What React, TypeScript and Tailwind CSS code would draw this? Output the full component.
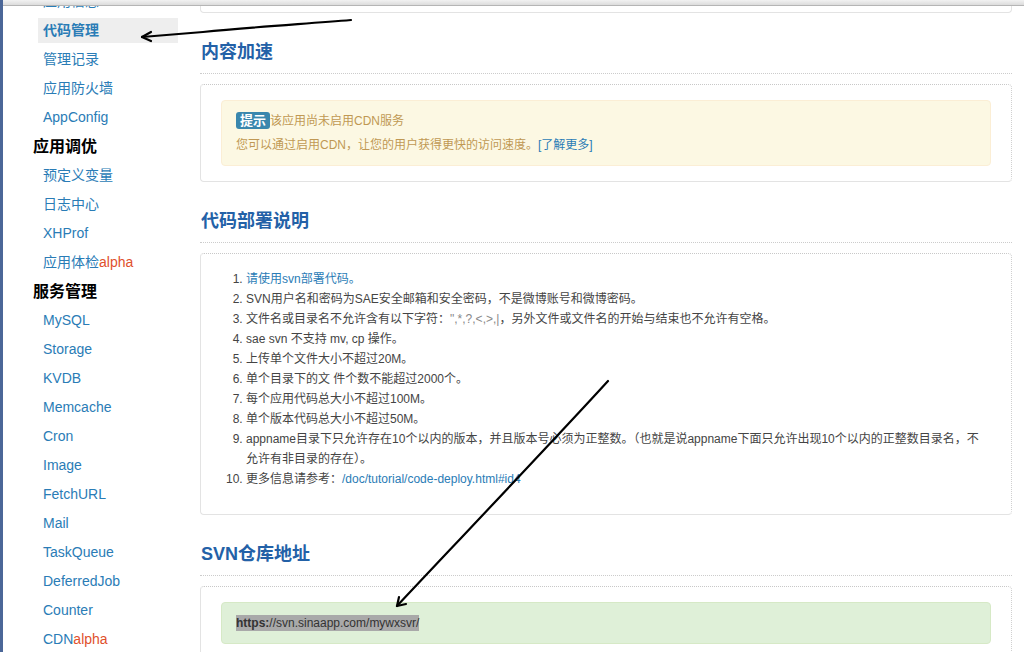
import React from 'react';

type Row = { label: string; kind?: 'head' | 'active'; tag?: string };

const rows: Row[] = [
  { label: '应用信息' },
  { label: '代码管理', kind: 'active' },
  { label: '管理记录' },
  { label: '应用防火墙' },
  { label: 'AppConfig' },
  { label: '应用调优', kind: 'head' },
  { label: '预定义变量' },
  { label: '日志中心' },
  { label: 'XHProf' },
  { label: '应用体检', tag: 'alpha' },
  { label: '服务管理', kind: 'head' },
  { label: 'MySQL' },
  { label: 'Storage' },
  { label: 'KVDB' },
  { label: 'Memcache' },
  { label: 'Cron' },
  { label: 'Image' },
  { label: 'FetchURL' },
  { label: 'Mail' },
  { label: 'TaskQueue' },
  { label: 'DeferredJob' },
  { label: 'Counter' },
  { label: 'CDN', tag: 'alpha' },
];

function Sidebar() {
  return (
    <nav className="w-[197px] shrink-0">
      <ul className="-mt-[13px]">
        {rows.map((r) =>
          r.kind === 'head' ? (
            <li key={r.label} className="h-[29px] flex items-center pl-[30px] text-[16px] font-bold text-black">
              {r.label}
            </li>
          ) : (
            <li key={r.label} className="h-[29px] flex items-center">
              <a
                className={`ml-[35px] w-[140px] h-[25px] flex items-center pl-[5px] text-[14px] text-[#2a7cb6] ${
                  r.kind === 'active' ? 'bg-[#eeeeee] font-semibold text-[#1c6aa6]' : ''
                }`}
              >
                {r.label}
                {r.tag && <span className="text-[#e0502c]">{r.tag}</span>}
              </a>
            </li>
          )
        )}
      </ul>
    </nav>
  );
}

function Heading({ children }: { children: React.ReactNode }) {
  return (
    <h2 className="mt-[27px] pl-px pb-[9px] border-b border-dotted border-[#cccccc] text-[18px] leading-[24px] font-bold text-[#2361a7]">
      {children}
    </h2>
  );
}

function Panel({ children }: { children: React.ReactNode }) {
  return (
    <div className="mt-[10px] rounded-[4px] border border-[#e3e3e3] [border-top-style:dotted] [border-right-style:dotted] border-t-[#c8c8c8] border-r-[#d0d0d0] px-[20px] py-[15px]">
      {children}
    </div>
  );
}

function Arrows() {
  return (
    <svg className="absolute inset-0 pointer-events-none" width="1024" height="652" viewBox="0 0 1024 652">
      <g fill="none" stroke="#000" strokeWidth="2.2" strokeLinecap="round" strokeLinejoin="round">
        <path d="M348 20 C 300 24, 250 27, 200 32 L 139 37" />
        <path d="M139 37 L 148 32 M139 37 L 148 41" />
        <path d="M605 381 C 565 425, 475 520, 394 606" />
        <path d="M394 606 L 396 597 M394 606 L 403 604" />
      </g>
    </svg>
  );
}

export default function App() {
  return (
    <div className="relative w-[1024px] h-[652px] overflow-hidden bg-white border-l-[3px] border-[#4b6798] font-['Liberation_Sans','Noto_Sans_CJK_SC',sans-serif]">
      <div className="absolute top-0 left-0 right-0 h-[6px] z-10 bg-gradient-to-b from-[#f2f2f2] to-[#dcdcdc] border-b border-[#b5b5b5]" />
      <div className="flex">
        <Sidebar />
        <main className="w-[812px] shrink-0">
          <div className="h-[13px] border border-t-0 border-[#e3e3e3] rounded-b-[4px]" />

          <Heading>内容加速</Heading>
          <Panel>
            <div className="rounded-[4px] border border-[#fbeed5] bg-[#fcf8e3] px-[14px] py-[8px] text-[12px] leading-[24px] text-[#c09853]">
              <div>
                <span className="inline-block rounded-[3px] bg-[#3a87ad] px-[4px] text-[13px] leading-[17px] font-bold text-white">提示</span>
                该应用尚未启用CDN服务
              </div>
              <div>
                您可以通过启用CDN，让您的用户获得更快的访问速度。<a className="text-[#2a7cb6]">[了解更多]</a>
              </div>
            </div>
          </Panel>

          <Heading>代码部署说明</Heading>
          <Panel>
            <ol className="list-decimal ml-[25px] mr-[10px] mb-[10px] text-[12px] leading-[20px] text-[#444]">
              <li>
                <a className="text-[#2a7cb6]">请使用svn部署代码。</a>
              </li>
              <li>SVN用户名和密码为SAE安全邮箱和安全密码，不是微博账号和微博密码。</li>
              <li>
                文件名或目录名不允许含有以下字符：<span className="text-[#888]">",*,?,&lt;,&gt;,|</span>，另外文件或文件名的开始与结束也不允许有空格。
              </li>
              <li>sae svn 不支持 mv, cp 操作。</li>
              <li>上传单个文件大小不超过20M。</li>
              <li>单个目录下的文 件个数不能超过2000个。</li>
              <li>每个应用代码总大小不超过100M。</li>
              <li>单个版本代码总大小不超过50M。</li>
              <li>
                appname目录下只允许存在10个以内的版本，并且版本号必须为正整数。（也就是说appname下面只允许出现10个以内的正整数目录名，不允许有非目录的存在）。
              </li>
              <li>
                更多信息请参考：<a className="text-[#2a7cb6]">/doc/tutorial/code-deploy.html#id4</a>
              </li>
            </ol>
          </Panel>

          <Heading>SVN仓库地址</Heading>
          <Panel>
            <div className="rounded-[4px] border border-[#d6e9c6] bg-[#dff0d8] px-[14px] py-[8px] text-[12px] leading-[24px] text-[#333]">
              <span className="bg-[#a9a9a9] py-[1px]">
                <b>https:</b>//svn.sinaapp.com/mywxsvr/
              </span>
            </div>
          </Panel>
        </main>
      </div>
      <Arrows />
    </div>
  );
}
